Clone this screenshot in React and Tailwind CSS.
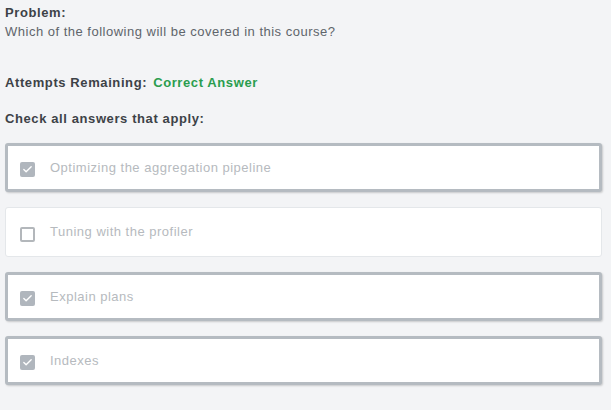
import { Check } from "lucide-react";

const options = [
  { label: "Optimizing the aggregation pipeline", checked: true },
  { label: "Tuning with the profiler", checked: false },
  { label: "Explain plans", checked: true },
  { label: "Indexes", checked: true },
];

function Option({ label, checked }) {
  return (
    <div
      className={`flex items-center w-[597px] bg-white rounded-[3px] ${
        checked
          ? "h-[49px] border-[3px] border-[#b5bbc1] shadow-[1px_1px_2px_rgba(0,0,0,0.18)] pl-[12px]"
          : "h-[50px] border border-[#e4e7ea] pl-[14px]"
      }`}
    >
      {checked ? (
        <span className="mt-[4px] w-[15px] h-[15px] rounded-[2px] bg-[#b0b6bd] flex items-center justify-center">
          <Check size={11} strokeWidth={3} className="text-white" />
        </span>
      ) : (
        <span className="mt-[4px] w-[15px] h-[15px] rounded-[2px] border-2 border-[#b3b7bb] bg-white" />
      )}
      <span className="ml-[15px] text-[13px] tracking-[0.5px] text-[#b6babe]">{label}</span>
    </div>
  );
}

export default function App() {
  return (
    <div className="w-[611px] h-[410px] bg-[#f3f4f6] px-[5px] pt-[3px] font-['Liberation_Sans',Arial,sans-serif] tracking-[0.5px] text-[#3d4247]">
      <div className="text-[13px] font-bold leading-[19px] tracking-[0.6px]">Problem:</div>
      <div className="text-[13px] leading-[19px] text-[#5f656b]">
        Which of the following will be covered in this course?
      </div>

      <div className="mt-[32px] text-[13px] font-bold leading-[19px] tracking-[0.6px] flex gap-[6px]">
        <span>Attempts Remaining:</span>
        <span className="text-[#2a9d4f]">Correct Answer</span>
      </div>

      <div className="mt-[17px] text-[13px] font-bold leading-[19px] tracking-[0.6px]">
        Check all answers that apply:
      </div>

      <div className="mt-[15px] flex flex-col gap-[15px]">
        {options.map((o) => (
          <Option key={o.label} {...o} />
        ))}
      </div>
    </div>
  );
}
